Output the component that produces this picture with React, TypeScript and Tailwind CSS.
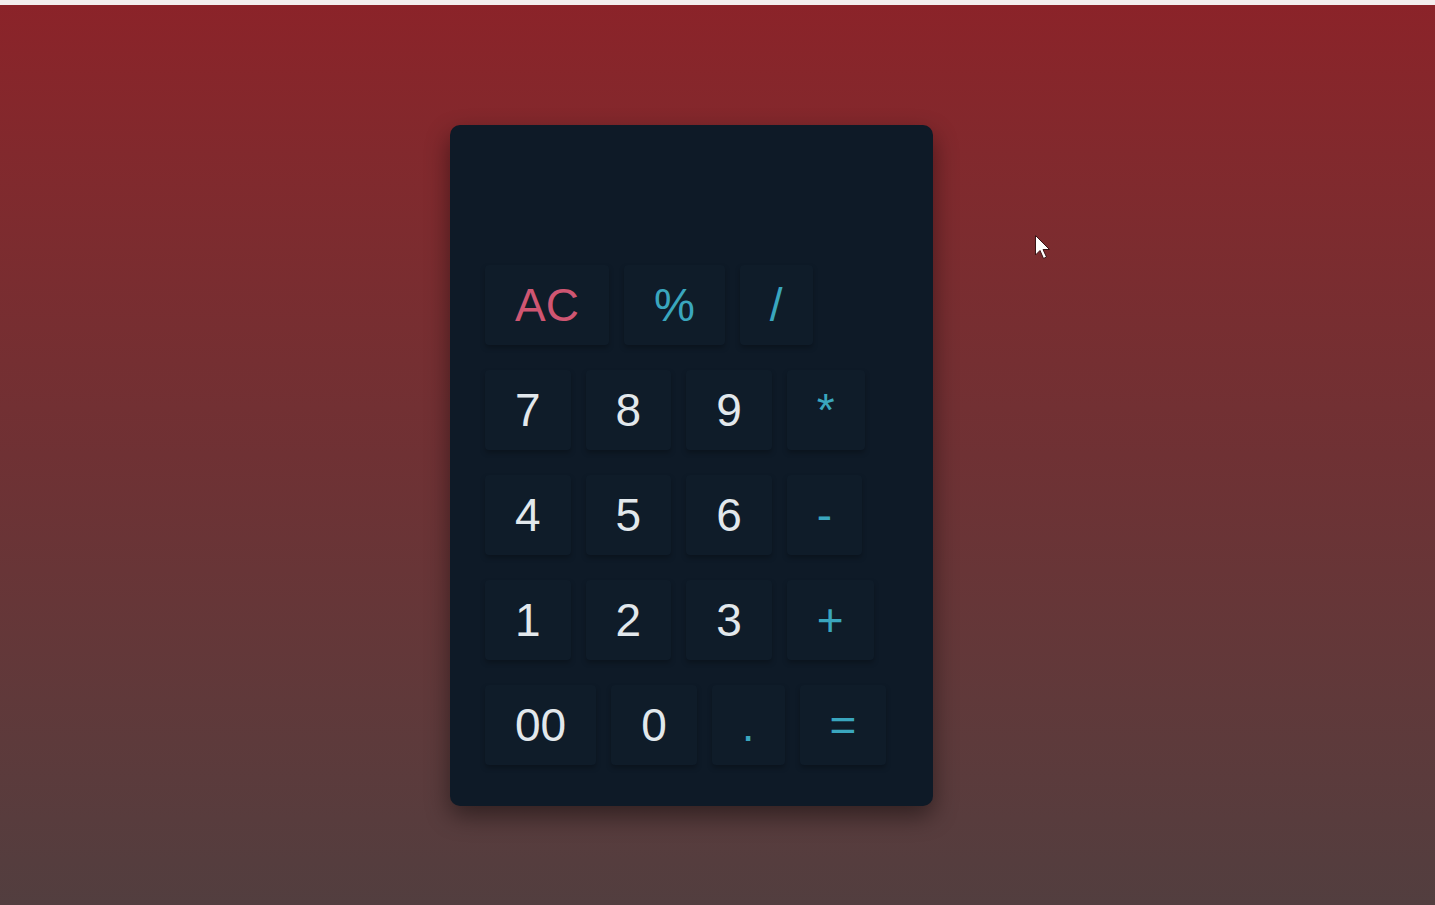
import React from 'react';

type Key = { label: string; tone: 'num' | 'op' | 'clear' };

// Keypad rows, laid out left to right as in the original calculator
const rows: Key[][] = [
  [
    { label: 'AC', tone: 'clear' },
    { label: '%', tone: 'op' },
    { label: '/', tone: 'op' },
  ],
  [
    { label: '7', tone: 'num' },
    { label: '8', tone: 'num' },
    { label: '9', tone: 'num' },
    { label: '*', tone: 'op' },
  ],
  [
    { label: '4', tone: 'num' },
    { label: '5', tone: 'num' },
    { label: '6', tone: 'num' },
    { label: '-', tone: 'op' },
  ],
  [
    { label: '1', tone: 'num' },
    { label: '2', tone: 'num' },
    { label: '3', tone: 'num' },
    { label: '+', tone: 'op' },
  ],
  [
    { label: '00', tone: 'num' },
    { label: '0', tone: 'num' },
    { label: '.', tone: 'op' },
    { label: '=', tone: 'op' },
  ],
];

const toneClass: Record<Key['tone'], string> = {
  num: 'text-[#e2e8ec]',
  op: 'text-[#3aa6be]',
  clear: 'text-[#cf5672]',
};

const CalcKey: React.FC<{ item: Key }> = ({ item }) => (
  <button
    type="button"
    className={`h-[80px] px-[30px] rounded-[4px] bg-[#0f1c29] shadow-[0_3px_5px_rgba(0,0,0,0.25)] text-[46px] leading-none ${toneClass[item.tone]}`}
  >
    {item.label}
  </button>
);

export default function App() {
  return (
    <div className="min-h-screen flex flex-col font-['Liberation_Sans',Arial,sans-serif]">
      <div className="h-[5px] bg-[#f4eeee]" />
      <main className="relative flex-1 flex justify-center pr-[52px] pt-[120px] bg-gradient-to-b from-[#8b2329] via-[#6f3134] to-[#523e3f]">
        {/* Calculator */}
        <div className="w-[483px] h-[681px] rounded-[10px] bg-[#0e1a27] shadow-[0_10px_25px_rgba(0,0,0,0.45)] pt-[140px] pl-[35px] flex flex-col gap-[25px]">
          {rows.map((row, i) => (
            <div key={i} className="flex gap-[15px]">
              {row.map((k) => (
                <CalcKey key={k.label} item={k} />
              ))}
            </div>
          ))}
        </div>

        {/* Mouse pointer */}
        <svg
          className="absolute left-[1034px] top-[229px]"
          width="19"
          height="27"
          viewBox="0 0 19 27"
        >
          <path
            d="M1.5 1.5 L1.5 21 L6 16.5 L9.5 24.5 L12.5 23 L9 15.5 L15.5 15.5 Z"
            fill="#ffffff"
            stroke="#3a1416"
            strokeWidth="1"
            strokeLinejoin="round"
          />
        </svg>
      </main>
    </div>
  );
}
